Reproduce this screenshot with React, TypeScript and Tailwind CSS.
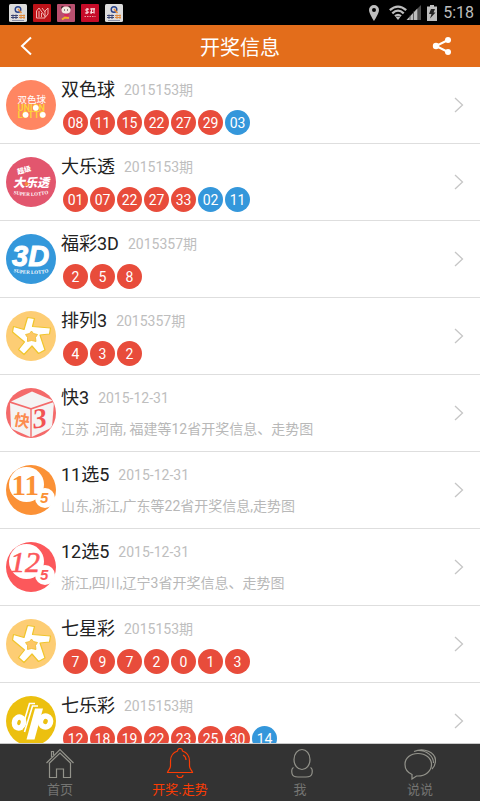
import React from 'react';

interface Lottery {
  name: string;
  date: string;
  logo: React.ReactNode;
  red?: string[];
  blue?: string[];
  desc?: string;
}

const SANS = 'Roboto, "Noto Sans CJK SC", sans-serif';

/* Lottery logos */
const UnionLogo = () => (
  <svg viewBox="0 0 50 50" className="size-full" fontFamily={SANS} aria-hidden="true">
    <circle cx="25" cy="25" r="25" fill="#ff8662" />
    <text x="11.500" y="22.500" fontSize="9.500" fill="#fff">双色球</text>
    <g fill="#fdd23a" fontWeight="700" fontSize="9">
      <text x="11.500" y="31">UNION</text>
      <text x="11.500" y="38">LOTTO</text>
    </g>
    <circle cx="29.800" cy="27.800" r="2.900" fill="#fff" />
    <circle cx="19.600" cy="34.800" r="2.900" fill="#fff" />
    <circle cx="36.800" cy="34.800" r="2.900" fill="#fff" />
  </svg>
);

const SuperLogo = () => (
  <svg viewBox="0 0 50 50" className="size-full" fontFamily={SANS} aria-hidden="true">
    <circle cx="25" cy="25" r="25" fill="#e2566e" />
    <text x="12" y="17.500" fontSize="7" fontWeight="900" fill="#fff" transform="rotate(-16 12 17.500)">超级</text>
    <text x="7" y="29.500" fontSize="12" fontWeight="900" fontStyle="italic" fill="#fff">大乐透</text>
    <circle cx="20.500" cy="27" r="2" fill="#f58a3c" />
    <path id="superArc" d="M7.500 37Q25 41 44 36.500" fill="none" />
    <text fontSize="5" fontWeight="700" fontFamily="Liberation Serif, serif" fill="#fff">
      <textPath href="#superArc">SUPER LOTTO</textPath>
    </text>
  </svg>
);

const ThreeDLogo = () => (
  <svg viewBox="0 0 50 50" className="size-full" aria-hidden="true">
    <circle cx="25" cy="25" r="25" fill="#3498db" />
    <text x="6" y="31.500" fontSize="29" fontWeight="700" fontStyle="italic" fontFamily="Liberation Sans, sans-serif" fill="#fff" stroke="#fff" strokeWidth="1">3D</text>
    <path id="threeArc" d="M7.500 38Q25 42 44 38" fill="none" />
    <text fontSize="5" fontWeight="700" fontFamily="Liberation Serif, serif" fill="#fff">
      <textPath href="#threeArc">SUPER LOTTO</textPath>
    </text>
  </svg>
);

const StarLogo = () => (
  <svg viewBox="0 0 50 50" className="size-full" aria-hidden="true">
    <circle cx="25" cy="25" r="25" fill="#fdcd74" />
    <path
      d="M21.500 6.500L28.500 7.500L26.500 15.500L44.500 17L43.500 23L34 24L39 39L32.500 42.500L26 35L18 43.500L12.500 38.500L18.500 31L6.500 21L7.500 15.500L18 18.500Z"
      fill="#fff"
      stroke="#f0c52c"
      strokeWidth="1.200"
      strokeLinejoin="round"
    />
    <path d="M25.500 20L27.500 22.500L31.500 23.500L29.500 26.500L30 30.500L25.500 29.500L21.500 30.500L21.500 26.500L19.500 23.500L23.500 22.500Z" fill="#fdc766" stroke="#ecbd28" strokeWidth="0.800" />
  </svg>
);

const CubeLogo = () => (
  <svg viewBox="0 0 50 50" className="size-full" fontFamily={SANS} aria-hidden="true">
    <clipPath id="cubeClip">
      <circle cx="25" cy="25" r="24.500" />
    </clipPath>
    <circle cx="25" cy="25" r="25" fill="#f46a6a" />
    <g clipPath="url(#cubeClip)">
      <path d="M26 3.500L47 12.500L25 20L5 13.500Z" fill="#f5f3f3" />
      <path d="M4 15L24.300 21.500L24.300 49L5 40.500Z" fill="#f5f3f3" />
      <path d="M25.700 21.500L48 14L46 39.500L25.700 49Z" fill="#f5f3f3" />
    </g>
    <text x="7" y="37" fontSize="16" fontWeight="700" fill="#fc8c50" transform="rotate(10 7 37)">快</text>
    <text x="28" y="40.500" fontSize="28" fontWeight="700" fontStyle="italic" fontFamily="Liberation Serif, serif" fill="#f25252" transform="rotate(-8 28 40.500)">3</text>
  </svg>
);

const ElevenLogo = () => (
  <svg viewBox="0 0 50 50" className="size-full" aria-hidden="true">
    <circle cx="25" cy="25" r="25" fill="#fb9136" />
    <circle cx="20.500" cy="19.500" r="17.500" fill="#fff" />
    <circle cx="39" cy="33" r="10" fill="#fff" />
    <g fill="#fb9136" fontWeight="700">
      <text x="5.500" y="30" fontSize="29" fontFamily="Liberation Serif, serif">11</text>
      <text x="34" y="38" fontSize="15" fontStyle="italic" fontFamily="Liberation Sans, sans-serif">5</text>
    </g>
  </svg>
);

const TwelveLogo = () => (
  <svg viewBox="0 0 50 50" className="size-full" aria-hidden="true">
    <circle cx="25" cy="25" r="25" fill="#fc585b" />
    <circle cx="20.500" cy="19.500" r="17.500" fill="#fff" />
    <circle cx="39" cy="33" r="10" fill="#fff" />
    <g fill="#fc585b" fontStyle="italic">
      <text x="4" y="30" fontSize="30" fontFamily="Liberation Serif, serif" stroke="#fc585b" strokeWidth="0.600">12</text>
      <text x="34" y="38" fontSize="15" fontWeight="700" fontFamily="Liberation Sans, sans-serif">5</text>
    </g>
  </svg>
);

const WelfareLogo = () => (
  <svg viewBox="0 0 50 50" className="size-full" aria-hidden="true">
    <circle cx="25" cy="25" r="25" fill="#ecc00f" />
    <g fill="none" stroke="#fff">
      <ellipse cx="13" cy="26.500" rx="4.500" ry="5.500" strokeWidth="5.500" transform="rotate(18 13 26.500)" />
      <ellipse cx="39.500" cy="25.500" rx="5" ry="5.500" strokeWidth="5.500" transform="rotate(18 39.500 25.500)" />
      <path d="M15.500 34L23.500 7.500H29" strokeWidth="1.600" />
      <path d="M18.500 36L26.500 10H32" strokeWidth="1.600" />
    </g>
    <path d="M29 12.500H37L28.500 43.500H20.500Z" fill="#fff" />
  </svg>
);

const lotteries: Lottery[] = [
  { name: '双色球', date: '2015153期', logo: <UnionLogo />, red: ['08', '11', '15', '22', '27', '29'], blue: ['03'] },
  { name: '大乐透', date: '2015153期', logo: <SuperLogo />, red: ['01', '07', '22', '27', '33'], blue: ['02', '11'] },
  { name: '福彩3D', date: '2015357期', logo: <ThreeDLogo />, red: ['2', '5', '8'] },
  { name: '排列3', date: '2015357期', logo: <StarLogo />, red: ['4', '3', '2'] },
  { name: '快3', date: '2015-12-31', logo: <CubeLogo />, desc: '江苏 ,河南, 福建等12省开奖信息、走势图' },
  { name: '11选5', date: '2015-12-31', logo: <ElevenLogo />, desc: '山东,浙江,广东等22省开奖信息,走势图' },
  { name: '12选5', date: '2015-12-31', logo: <TwelveLogo />, desc: '浙江,四川,辽宁3省开奖信息、走势图' },
  { name: '七星彩', date: '2015153期', logo: <StarLogo />, red: ['7', '9', '7', '2', '0', '1', '3'] },
  { name: '七乐彩', date: '2015153期', logo: <WelfareLogo />, red: ['12', '18', '19', '22', '23', '25', '30'], blue: ['14'] },
];

/* Notification icons of the status bar */
const BrandNotice = () => (
  <svg viewBox="0 0 18 18" className="size-[18px]" aria-hidden="true">
    <rect width="18" height="18" rx="1.500" fill="#dcdcdc" />
    <circle cx="9" cy="5.500" r="2.800" fill="none" stroke="#27418a" strokeWidth="1.400" />
    <path d="M9 5L12.500 9" stroke="#e88a35" strokeWidth="1.500" />
    <path d="M2 11.500H9M2 13.500H9M4 10.500V15M7 10.500V15" stroke="#3c4775" strokeWidth="1" />
    <path d="M10 11.500H16M10 13.500H16M12 10.500V15M15 10.500V15" stroke="#e08a3c" strokeWidth="1" />
    <path d="M3 16.500H15" stroke="#777f9c" strokeWidth="0.800" />
  </svg>
);

const StatusBar = () => (
  <div className="flex h-[25px] shrink-0 items-center justify-between bg-black pl-[9px] pr-1.5">
    <div className="flex gap-1.5">
      <BrandNotice />
      <svg viewBox="0 0 18 18" className="size-[18px]" aria-hidden="true">
        <rect width="18" height="18" rx="1" fill="#bd1218" />
        <path d="M3.500 14V7L6 4L12.500 13L15 10V4L12 7V14M3.500 14H12M6 7V13M9 4L12 8M8.500 9V13" fill="none" stroke="#f1b3b0" strokeWidth="1" />
      </svg>
      <svg viewBox="0 0 18 18" className="size-[18px]" aria-hidden="true">
        <rect width="18" height="18" rx="1" fill="#b8506f" />
        <circle cx="5.500" cy="3.500" r="1.500" fill="#3d2429" />
        <circle cx="12.500" cy="3.500" r="1.500" fill="#3d2429" />
        <ellipse cx="9" cy="6" rx="4.500" ry="3.500" fill="#f3e8e0" />
        <path d="M7 6H8M10 6H11" stroke="#222" strokeWidth="1.200" />
        <path d="M7 10H12L11 14H8Z" fill="#d9265c" />
        <path d="M5 15.500L8 13.500L12 14" fill="none" stroke="#f0b429" strokeWidth="2" />
      </svg>
      <svg viewBox="0 0 18 18" className="size-[18px]" aria-hidden="true">
        <rect width="18" height="18" rx="1" fill="#c60b28" />
        <path d="M4 6L8 5M6 4V10M4 9L8 8M9 5H14M11 4L10 10M9 8L14 9M13 4V8" stroke="#f9dfe0" strokeWidth="1.200" />
        <path d="M3.500 12.500H14.500" stroke="#e9a1a8" strokeWidth="1" strokeDasharray="1.500 1" />
      </svg>
      <BrandNotice />
    </div>
    <div className="flex items-center text-[#bdbdbd]">
      <svg viewBox="0 0 10 16" className="mr-2.5 h-4 w-2.5" fill="currentColor" aria-hidden="true">
        <path fillRule="evenodd" d="M5 0A5 5 0 0 0 0 5C0 8.500 5 16 5 16S10 8.500 10 5A5 5 0 0 0 5 0ZM5 3A2 2 0 1 1 5 7A2 2 0 0 1 5 3Z" />
      </svg>
      <svg viewBox="0 0 32 16" className="mr-1.5 h-4 w-8" aria-hidden="true">
        <g fill="none" stroke="currentColor" strokeWidth="2.300">
          <path d="M0.800 5.200Q9 -2 17.200 5.200" />
          <path d="M3.300 8.300Q9 3 14.700 8.300" />
          <path d="M6 11.200Q9 8.500 12 11.200" />
        </g>
        <path d="M6.800 12.300Q9 10.800 11.200 12.300L9 15Z" fill="currentColor" />
        <path d="M32 0V15H28V4Z" fill="#4e4e4e" />
        <path d="M28.300 3.500V15H17.500Z" fill="currentColor" />
        <path d="M21 10V15M24.500 6V15" stroke="#333" strokeWidth="0.700" />
      </svg>
      <svg viewBox="0 0 10 16" className="mr-1.5 h-4 w-2.5" aria-hidden="true">
        <path d="M3 0H7V1.500H10V16H0V1.500H3Z" fill="currentColor" />
        <path d="M4 4H8L6.500 7.500H8.500L3 13.500L4.500 9H2Z" fill="#222" />
      </svg>
      <span className="text-base leading-6">5:18</span>
    </div>
  </div>
);

const Ball: React.FC<{ value: string; className: string }> = ({ value, className }) => (
  <span className={`flex size-[25px] items-center justify-center rounded-full text-sm text-white ${className}`}>
    {value}
  </span>
);

const LotteryRow: React.FC<{ item: Lottery }> = ({ item }) => (
  <li className="shrink-0 border-b border-[#dedede]">
    <a href="#" className="flex h-[76px] items-center pl-1.5 pr-4">
      <div className="size-[50px] shrink-0">{item.logo}</div>
      <div className="ml-[5px] min-w-0 flex-1 self-start pt-[11px]">
        <div className="flex h-6 items-center gap-[9px]">
          <h2 className="text-lg leading-6 text-[#222]">{item.name}</h2>
          <span className="text-sm leading-6 text-[#bebebe]">{item.date}</span>
        </div>
        {item.desc ? (
          <p className="mt-[7px] text-sm leading-6 text-[#b8b8b8]">{item.desc}</p>
        ) : (
          <div className="mt-2 flex gap-0.5 pl-0.5">
            {item.red?.map((n, i) => <Ball key={i} value={n} className="bg-[#e84c3b]" />)}
            {item.blue?.map((n, i) => <Ball key={i} value={n} className="bg-[#3497db]" />)}
          </div>
        )}
      </div>
      <svg viewBox="0 0 10 16" className="h-4 w-2.5" fill="none" stroke="#c6c6c6" strokeWidth="1.300" aria-hidden="true">
        <path d="M1 1L8.500 8L1 15" />
      </svg>
    </a>
  </li>
);

const tabs = [
  {
    label: '首页',
    icon: (
      <>
        <path d="M2.500 15L16 1.500L29.500 15" />
        <path d="M5 15.500L16 5L27 15.500" />
        <path d="M5.500 15V29.500H12.500V21H19.500V29.500H26.500V15M7.500 9V3.500H9.500V7" />
      </>
    ),
  },
  {
    label: '开奖.走势',
    active: true,
    icon: (
      <>
        <path d="M13.500 3A2.500 2.500 0 0 1 18.500 3C23 4.500 25.500 8 25.500 13V18C25.500 21 28 22 28.500 24.500H3.500C4 22 6.500 21 6.500 18V13C6.500 8 9 4.500 13.500 3Z" />
        <path d="M13 27A3 2.500 0 0 0 19 27M19 7Q22 8.500 22 12" />
      </>
    ),
  },
  {
    label: '我',
    icon: (
      <>
        <ellipse cx="18" cy="11.500" rx="8" ry="10" />
        <path d="M9.500 19.500C7.500 20.500 7.500 23 8 25.500C8.500 28.500 11 29 14 29H22C25 29 27.500 28.500 28 25.500C28.500 23 28.500 20.500 26.500 19.500" />
      </>
    ),
  },
  {
    label: '说说',
    icon: (
      <>
        <path d="M8 31V26.500C3.500 24.500 1 21 1 16.500C1 10 6.500 5.500 14 5.500S27.500 10 27.500 16.500S21.500 28 14 28H12.500Z" />
        <path d="M10 3.500C20 -1 31 4.500 31.500 12Q31.500 18 28 21M14 2.500C23 2.500 29.500 8 29.500 15" />
      </>
    ),
  },
];

const App: React.FC = () => {
  return (
    <div className="flex h-screen w-full flex-col overflow-hidden bg-white font-[Roboto,'Noto_Sans_CJK_SC',sans-serif]">
      <StatusBar />

      {/* Header */}
      <header className="grid h-[42px] shrink-0 grid-cols-[1fr_auto_1fr] items-center bg-[#e36d1b] pl-4 pr-7 text-white">
        <button type="button" aria-label="返回" className="flex size-5 items-center justify-center">
          <svg viewBox="0 0 12 20" className="h-5 w-3" fill="none" stroke="currentColor" strokeWidth="2">
            <path d="M11 1.500L2 10L11 18.500" />
          </svg>
        </button>
        <h1 className="ml-3 pt-1 text-xl leading-8">开奖信息</h1>
        <button type="button" aria-label="分享" className="flex size-5 items-center justify-center justify-self-end">
          <svg viewBox="0 0 20 20" className="size-5" fill="currentColor">
            <path d="M16 4L4 10L16 16" fill="none" stroke="currentColor" strokeWidth="2" />
            <circle cx="4" cy="10" r="3.200" />
            <circle cx="16" cy="4" r="3" />
            <circle cx="16" cy="16" r="3" />
          </svg>
        </button>
      </header>

      {/* Results */}
      <ul className="flex min-h-0 flex-1 flex-col overflow-y-auto [scrollbar-width:none]">
        {lotteries.map((item) => <LotteryRow key={item.name} item={item} />)}
      </ul>

      {/* Bottom navigation */}
      <nav className="grid h-[58px] shrink-0 grid-cols-4 border-t border-[#c9c9c9] bg-[#333]">
        {tabs.map((tab) => (
          <a
            key={tab.label}
            href="#"
            className={`flex flex-col items-center pt-1 ${tab.active ? 'text-[#fa3c04]' : 'text-[#747472]'}`}
          >
            <svg viewBox="0 0 32 32" className="size-8" fill="none" stroke={tab.active ? '#fa3c04' : '#93938b'} strokeWidth="1.200" aria-hidden="true">
              {tab.icon}
            </svg>
            <span className="text-[13px] leading-5">{tab.label}</span>
          </a>
        ))}
      </nav>
    </div>
  );
};

export default App;
